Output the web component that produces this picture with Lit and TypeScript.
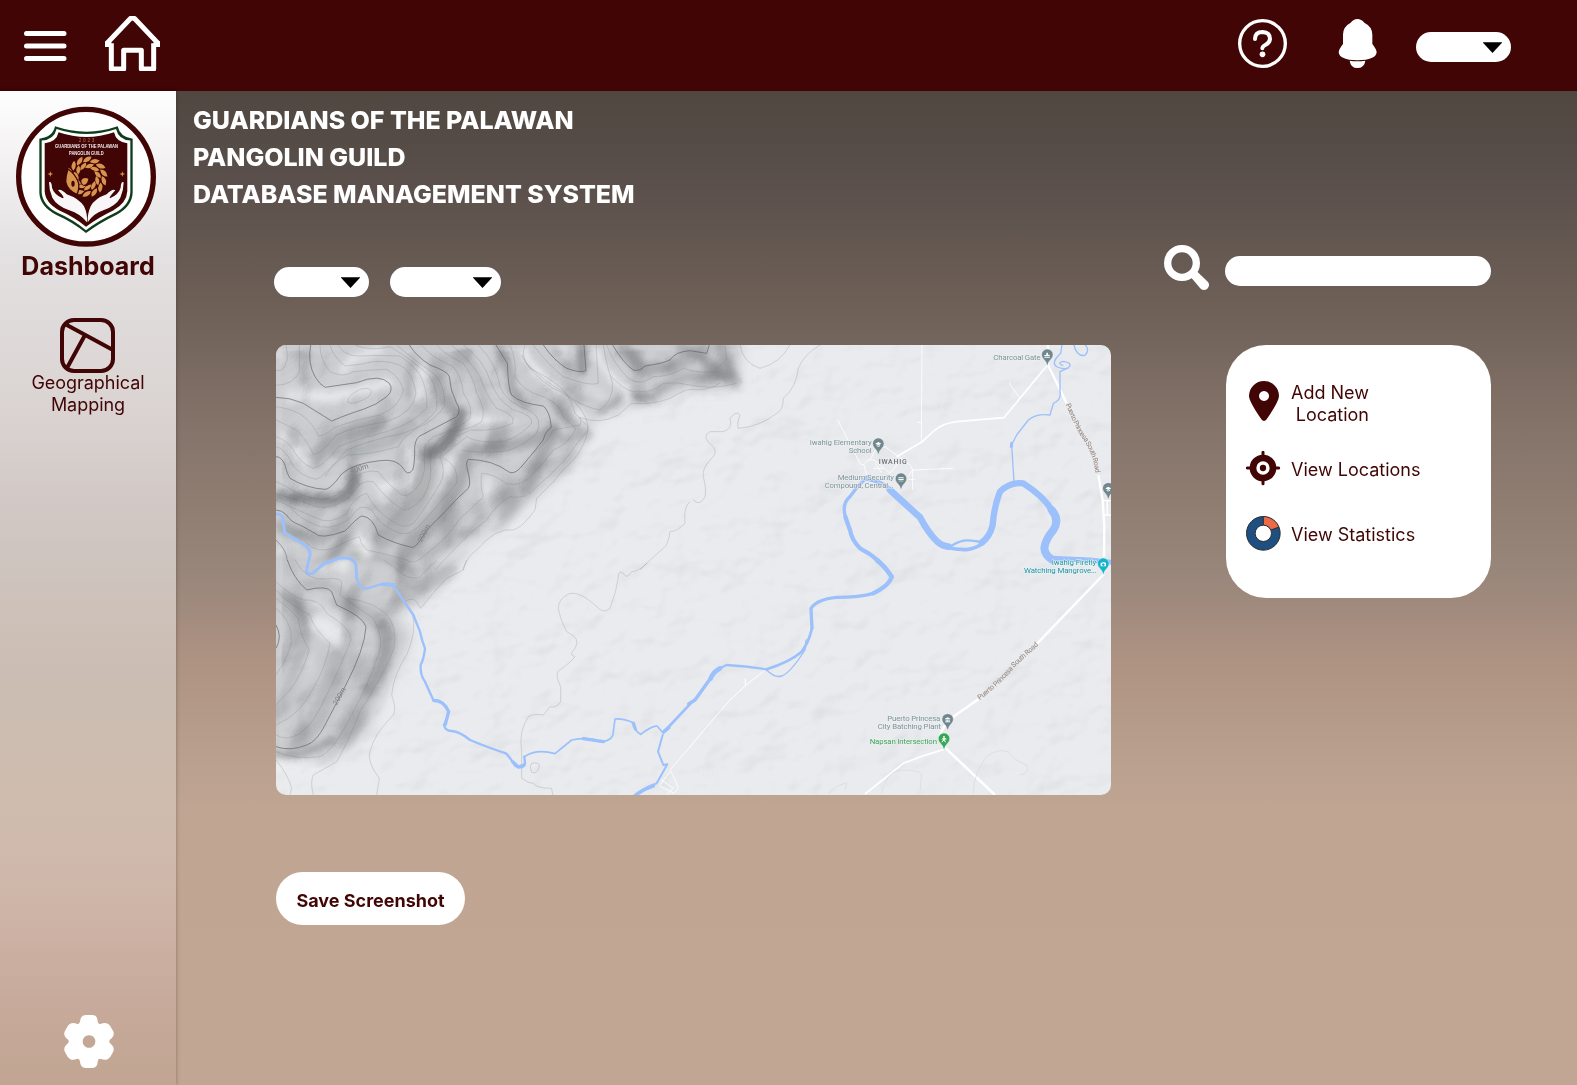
import { LitElement, html, css, svg } from "lit";
import { customElement, property } from "lit/decorators.js";

const MAROON = "#400504";

/* Contour lines of the north-western range. */
const majorNorth = [
  "M122,15Q112,70 135,110Q150,135 165,142L260,128Q330,100 358,130Q372,150 350,170Q320,195 280,208Q240,220 185,243Q140,215 100,190Q60,172 18,172",
  "M418,15Q440,50 480,75Q535,95 538,110Q540,150 560,190Q575,210 560,230L455,285Q438,290 434,320Q435,370 428,390Q412,410 400,385Q380,355 330,362Q250,370 215,402Q180,450 165,448Q110,445 60,415Q50,400 45,375Q35,350 18,350",
  "M678,15L712,70Q715,150 725,165Q750,190 820,198Q840,215 844,262Q825,275 820,300Q780,350 750,385Q730,405 715,395Q670,360 595,358Q585,365 595,400Q603,430 595,445Q560,475 530,510L470,570Q440,625 425,622Q370,610 325,585Q310,530 275,528Q260,535 225,573Q150,600 135,580L90,555Q60,545 50,525Q35,510 18,510",
  "M820,15Q850,60 890,85Q930,100 948,92L942,15",
  "M1028,15Q1060,70 1090,90Q1110,95 1125,78Q1180,70 1200,60Q1215,35 1260,32L1310,40L1318,15",
];
const minorNorth = [
  "M48,15Q60,70 35,90L18,92",
  "M88,15Q90,60 88,95Q70,135 18,136",
  "M150,15Q150,60 180,95Q220,115 250,95Q300,90 350,88Q390,110 400,150Q390,200 330,225Q250,240 190,265Q160,290 145,288Q130,250 95,225Q60,205 18,200",
  "M180,15Q190,50 225,78Q270,75 310,65Q370,60 405,85Q430,110 438,160Q430,220 350,245Q250,260 200,285Q150,345 130,343Q110,300 80,270Q40,250 18,240",
  "M205,15Q220,45 260,48Q330,45 390,48Q430,75 450,105Q475,150 470,205Q430,250 350,275Q250,300 205,320Q160,380 130,385Q90,370 70,330Q50,300 18,290",
  "M255,15Q300,35 360,20Q430,60 480,110Q505,150 500,210Q460,260 400,280Q300,300 230,330Q160,410 140,418Q90,410 65,370Q45,325 18,320",
  "M380,15Q420,50 490,100Q525,130 525,195Q500,240 440,265Q400,290 385,320Q300,345 230,345Q190,370 165,410",
  "M455,15Q480,50 550,80Q575,110 580,160Q610,200 600,235Q570,265 490,290Q460,310 462,350Q470,390 450,430Q420,475 395,465Q350,430 325,395Q280,385 240,425Q200,480 150,478Q90,470 50,440L18,425",
  "M500,15Q520,40 580,70Q610,110 620,160Q650,210 635,245Q600,270 540,275Q480,310 480,360Q490,420 460,470Q430,510 400,510Q350,480 310,425Q270,415 240,470Q190,510 140,500Q80,480 18,460",
  "M545,15Q600,60 630,110Q650,170 680,205Q740,225 728,250Q680,275 600,270Q530,300 510,350Q530,400 510,430Q470,500 430,550Q400,570 370,545Q320,520 290,460Q250,470 230,520Q180,560 130,530Q80,510 18,480",
  "M580,15Q640,60 660,120Q680,180 730,210Q790,225 785,250Q750,290 700,305Q620,310 590,290Q540,330 515,350Q570,380 560,430Q510,490 460,545Q420,590 390,580Q330,560 305,510Q270,485 245,530Q200,570 150,560Q90,540 60,500",
  "M625,15Q680,70 690,140Q710,190 780,212Q820,235 800,280Q760,320 700,335Q620,340 575,330",
  "M755,45Q780,100 850,145Q900,165 930,205Q955,240 955,270Q920,310 900,340Q860,390 800,440Q770,480 720,470Q680,490 650,540L600,580Q540,640 495,690",
  "M720,15Q740,60 735,110Q760,155 820,170Q870,190 880,230Q900,250 917,265Q900,310 850,330Q820,370 790,400Q760,440 710,432Q670,400 635,400Q630,440 640,470Q600,510 570,535Q530,600 470,640Q430,680 410,660Q340,640 290,630Q270,610 268,590Q235,600 190,625Q140,640 110,610",
  "M765,15Q750,50 780,85Q850,120 880,150Q905,180 915,220Q940,240 930,255L850,270Q830,310 790,340",
  "M790,15Q830,70 880,110Q960,140 985,130L978,15",
  "M770,70Q830,130 880,155Q930,200 990,210Q1030,180 1028,130Q1010,80 1000,15",
  "M1010,15Q1030,70 1075,115Q1110,140 1150,110Q1200,110 1240,85Q1280,100 1330,95L1370,60L1365,15",
  "M1020,105Q1060,150 1090,155Q1150,160 1180,130Q1220,125 1260,135Q1330,150 1400,130",
  "M928,232Q990,255 1045,225Q1080,195 1085,190Q1150,195 1200,175Q1240,150 1260,148Q1310,155 1350,130",
  "M928,232L953,260Q955,300 915,355Q880,385 850,425L800,475L795,510Q760,560 730,570Q680,560 620,630Q590,650 578,690",
  "M232,185Q235,165 270,148Q300,140 305,155Q300,175 265,185Q245,195 232,185",
  "M1260,485Q1240,500 1245,550Q1220,575 1200,575Q1195,615 1180,625Q1150,650 1110,690",
  "M1410,15Q1420,70 1470,85Q1530,70 1560,15",
  "M1650,15Q1600,45 1585,85Q1580,140 1540,175Q1540,210 1520,220Q1470,260 1405,265Q1400,250 1410,225Q1400,210 1380,235Q1390,265 1360,275L1320,275Q1290,290 1330,320Q1345,340 1320,360Q1295,390 1300,410Q1310,450 1305,470Q1290,500 1270,480",
];

/* Contour lines of the south-western hill. */
const majorSouth = [
  "M52,-15Q70,40 110,75Q170,60 185,80L200,120Q280,155 288,185Q285,250 225,365L165,480Q140,530 110,540Q60,560 18,545",
  "M18,180Q38,215 18,250",
];
const minorSouth = [
  "M75,-15Q110,50 170,42Q220,35 215,60L210,90Q280,140 310,160Q345,220 325,270Q290,370 250,440Q190,560 150,575Q80,585 18,560",
  "M230,100Q320,110 360,160Q390,220 360,280Q310,380 270,440Q230,540 200,590L130,630Q120,650 130,690",
  "M18,50Q60,90 100,105Q150,100 170,145Q245,190 243,225Q210,310 175,380Q130,480 90,505Q50,530 18,510",
  "M18,75Q60,120 120,150Q130,190 180,235Q170,300 130,370Q90,450 18,480",
  "M18,100Q60,130 85,160Q90,210 118,255Q100,320 60,375L18,420",
  "M18,130Q55,160 62,200Q75,250 18,330",
  "M18,585Q55,630 65,670L60,690",
  "M320,690L328,640Q290,590 300,560Q310,510 370,450Q380,430 365,390Q370,330 410,270Q440,200 428,150",
  "M405,110Q425,95 440,110L452,130Q500,70 530,40L580,15L590,-15",
  "M340,-15Q380,10 400,30Q430,45 450,35L500,-15",
  "M1130,-5Q1105,20 1085,20Q1070,45 1060,25Q1045,15 1045,35Q1040,80 1020,130Q1000,150 975,120Q930,80 900,85Q865,100 865,130Q870,160 890,200Q935,220 915,250Q895,270 915,275Q905,290 865,318Q855,330 872,365L872,410Q860,430 840,425L820,450Q790,445 775,455Q745,500 755,560L755,640Q775,655 790,655Q800,670 845,670L848,690",
  "M785,595Q810,590 808,605Q800,630 785,622Q778,605 785,595",
];

/* Outline of the raised ground; everything outside it is the plain. */
const highland = "M-20,-20H1415L1405,140L1260,140L1170,185L1080,195L970,240L945,310L890,390L790,475L690,560L600,620L530,720L440,790L380,830L425,880L400,960L350,1050L290,1180L190,1260L-20,1250Z";

const dark: [string, number, number][] = [
  ["M575,225Q560,270 520,320L475,345", 40, 0.75],
  ["M685,20Q725,90 725,150L770,200", 26, 0.5],
  ["M850,265Q800,310 700,320L600,330", 36, 0.45],
  ["M850,275Q820,330 770,450", 40, 0.45],
  ["M250,400Q250,460 200,480L25,470", 34, 0.68],
  ["M130,360Q210,270 330,250", 50, 0.34],
  ["M200,340Q330,340 420,250", 40, 0.28],
  ["M935,20L938,90", 30, 0.68],
  ["M860,30L900,90", 20, 0.3],
  ["M1060,30L1120,90L1200,80", 40, 0.45],
  ["M1200,80L1300,30", 44, 0.38],
  ["M1090,172L1150,174", 20, 0.5],
  ["M1160,150L1240,110L1380,105", 26, 0.35],
  ["M1300,60L1395,125L1350,20", 34, 0.42],
  ["M1230,20L1290,50", 30, 0.35],
  ["M470,340Q480,480 340,600", 60, 0.38],
  ["M580,360Q570,450 470,560L400,640", 54, 0.4],
  ["M110,40L100,120", 26, 0.34],
  ["M60,160L90,160", 20, 0.3],
  ["M430,60Q410,120 420,170", 26, 0.32],
  ["M500,120Q500,180 560,210", 40, 0.3],
  ["M600,60Q640,150 640,200", 30, 0.24],
  ["M850,180Q880,240 955,285L870,300", 22, 0.38],
  ["M990,215Q1040,190 1060,165", 20, 0.35],
  ["M700,470L600,580L450,650", 34, 0.18],
  ["M230,520Q200,590 120,600L30,560", 34, 0.38],
  ["M300,500L350,500", 24, 0.3],
  ["M560,575L630,575", 14, 0.3],
  ["M220,600L190,650L330,650L430,690", 26, 0.3],
  ["M400,690Q430,780 540,690", 44, 0.25],
  ["M110,740Q200,720 240,790", 26, 0.28],
  ["M40,760Q110,800 110,880", 28, 0.35],
  ["M200,790Q350,830 360,900Q340,1000 250,1110", 44, 0.22],
  ["M340,860Q365,960 300,1050", 44, 0.38],
  ["M100,900Q80,1050 20,1120", 46, 0.25],
  ["M200,950Q170,1120 90,1200", 56, 0.22],
  ["M20,1242L90,1246L190,1200", 18, 0.5],
];
const light: [string, number, number][] = [
  ["M220,90L240,60L330,30", 24, 0.75],
  ["M60,165L200,170L350,125", 34, 0.75],
  ["M40,290L110,370", 28, 0.65],
  ["M460,90L450,170", 36, 0.65],
  ["M600,240L725,240", 20, 0.9],
  ["M762,30Q780,90 870,150L940,235", 22, 0.9],
  ["M975,30Q1010,110 1060,140L1080,185", 18, 0.9],
  ["M880,20L880,45", 20, 0.7],
  ["M960,150L1000,170", 22, 0.5],
  ["M420,340L410,430L340,440", 28, 0.8],
  ["M545,360L530,390", 22, 0.7],
  ["M652,420L655,510", 26, 0.65],
  ["M700,500L620,600L520,660", 34, 0.35],
  ["M265,590L290,640", 28, 0.85],
  ["M310,420Q370,500 330,560", 22, 0.35],
  ["M150,690L230,660L220,690", 20, 0.8],
  ["M70,620L20,640", 24, 0.5],
  ["M150,850L200,890", 54, 0.8],
  ["M140,790Q200,830 240,860", 24, 0.5],
  ["M60,1080L120,960", 24, 0.25],
  ["M20,1285L130,1290", 30, 0.7],
  ["M18,35L35,50", 24, 0.6],
];

type Poi = { x: number; y: number; c: string; g: unknown };
const cap = svg`<path d="M-9,-2L0,-7L9,-2L0,3ZM-5,2V5Q0,9 5,5V2L0,5Z"/>`;
const bank = svg`<path d="M-8,-4L0,-8L8,-4V-2H-8ZM-6,-1H-3V5H-6ZM-1.5,-1H1.5V5H-1.5ZM3,-1H6V5H3ZM-8,5H8V7H-8Z"/>`;
const pois: Poi[] = [
  { x: 1072, y: 46, c: "#71878f", g: svg`<path d="M-9,4H8V7H-9ZM-3,-8H2V-2H7V2H-9V-1H-3Z"/>` },
  { x: 565, y: 313, c: "#71878f", g: cap },
  { x: 633, y: 418, c: "#71878f", g: svg`<path d="M-8,-6H8V-3H-8ZM-8,-1H8V2H-8ZM-7,4H7V6H-7Z"/>` },
  { x: 1255, y: 447, c: "#71878f", g: cap },
  { x: 1240, y: 673, c: "#12b5cb", g: svg`<path fill-rule="evenodd" d="M-8,-5H-3L-1,-7H3L5,-5H8V6H-8ZM0,-3A4,4 0 1 0 .1,-3Z"/>` },
  { x: 773, y: 1140, c: "#71878f", g: bank },
  { x: 762, y: 1198, c: "#34a853", g: svg`<path d="M0,-10A2.5,2.5 0 1 1 -.1,-10ZM-3,-4L2,-5L8,-1V1L3,0L2,3L7,9H4L-1,4L-5,9H-8L-3,2L-3,-1L-6,2L-7,0Z"/>` },
];
type Label = { t: string; x: number; y: number; w: number; c: string };
const grey = "#7d939b";
const labels: Label[] = [
  { t: "Charcoal Gate", x: 910, y: 60, w: 142, c: grey },
  { t: "Iwahig Elementary", x: 359, y: 315, w: 186, c: grey },
  { t: "School", x: 476, y: 339, w: 69, c: grey },
  { t: "Medium Security", x: 443, y: 420, w: 169, c: grey },
  { t: "Compound, Central…", x: 404, y: 444, w: 206, c: grey },
  { t: "Iwahig Firefly", x: 1085, y: 675, w: 134, c: "#1a97a6" },
  { t: "Watching Mangrove…", x: 1002, y: 699, w: 217, c: "#1a97a6" },
  { t: "Puerto Princesa", x: 592, y: 1142, w: 159, c: grey },
  { t: "City Batching Plant", x: 563, y: 1166, w: 190, c: grey },
  { t: "Napsan Intersection", x: 539, y: 1213, w: 202, c: "#3fa55a" },
];

@customElement("terrain-map")
export class TerrainMap extends LitElement {
  static styles = css`
    :host { display: block; width: 835px; height: 450px; border-radius: 10px; overflow: hidden; }
    svg { display: block; }
    .label { font: 23.5px Roboto, sans-serif; }
    .road { font: 21px Roboto, sans-serif; fill: #93837c; }
    .town { font: 500 21px Roboto, sans-serif; fill: #6d7175; }
    .height { font: 22px Roboto, sans-serif; fill: #7f8182; }
    .grain { mix-blend-mode: multiply; }
    .crags { mix-blend-mode: hard-light; }
  `;
  render() {
    const strokes = (list: string[], color: string, w: number) =>
      list.map((d) => svg`<path d=${d} fill="none" stroke=${color} stroke-width=${w} />`);
    const shade = (list: [string, number, number][], color: string) =>
      list.map(([d, w, o]) => svg`<path d=${d} fill="none" stroke=${color} stroke-width=${w} stroke-opacity=${o} stroke-linecap="round" stroke-linejoin="round" />`);
    return html`<svg width="835" height="450" viewBox="276 345 835 450">
      <defs>
        <filter id="soft" x="-20%" y="-20%" width="140%" height="140%">
          <feGaussianBlur stdDeviation="10" result="b" />
          <feTurbulence type="fractalNoise" baseFrequency="0.04" numOctaves="2" seed="4" result="n" />
          <feDisplacementMap in="b" in2="n" scale="10" xChannelSelector="R" yChannelSelector="G" />
        </filter>
        <filter id="edge" x="-20%" y="-20%" width="140%" height="140%"><feGaussianBlur stdDeviation="18" /></filter>
        <filter id="relief" x="0" y="0" width="100%" height="100%" color-interpolation-filters="sRGB">
          <feTurbulence type="fractalNoise" baseFrequency="0.022 0.028" numOctaves="3" seed="8" />
          <feColorMatrix values="0 0 0 0 0  0 0 0 0 0  0 0 0 0 0  1 0 0 0 0" />
          <feDiffuseLighting surfaceScale="7" diffuseConstant="1.15" lighting-color="#ffffff">
            <feDistantLight azimuth="225" elevation="60" />
          </feDiffuseLighting>
        </filter>
        <filter id="rock" x="0" y="0" width="100%" height="100%" color-interpolation-filters="sRGB">
          <feTurbulence type="fractalNoise" baseFrequency="0.02 0.015" numOctaves="2" seed="21" />
          <feColorMatrix values="0 0 0 0 0  0 0 0 0 0  0 0 0 0 0  1 0 0 0 0" />
          <feGaussianBlur stdDeviation="2.5" />
          <feDiffuseLighting surfaceScale="28" diffuseConstant="0.85" lighting-color="#ffffff">
            <feDistantLight azimuth="225" elevation="42" />
          </feDiffuseLighting>
        </filter>
        <mask id="hills"><g transform="translate(270 340) scale(.33333)"><path filter="url(#edge)" fill="#fff" d=${highland} /></g></mask>
      </defs>
      <rect x="276" y="345" width="835" height="450" fill="#e9ebee" />
      <g transform="translate(270 340) scale(.33333)">
        <path filter="url(#edge)" fill="#c9cbce" d=${highland} />
        <g filter="url(#soft)">${shade(dark, "#737577")}${shade(light, "#eceef0")}</g>
      </g>
      <g mask="url(#hills)" class="crags" opacity=".15"><rect x="276" y="345" width="480" height="450" filter="url(#rock)" /></g>
      <rect class="grain" x="276" y="345" width="835" height="450" filter="url(#relief)" opacity=".09" />
      <g transform="translate(270 340) scale(.33333)">
        ${strokes(minorNorth, "rgba(110,112,114,.34)", 2)}
        ${strokes(majorNorth, "rgba(95,97,99,.7)", 2.8)}
        <path d="M18,600Q50,630 52,662" fill="none" stroke="#8b8d8f" stroke-width="2.5" />
        <text class="height" transform="translate(243 400) rotate(-17)">400m</text>
        <text class="height" transform="translate(455 608) rotate(-62)">200m</text>
        <path fill="none" stroke="#9bc0fb" stroke-linejoin="round" stroke-width="9" d="M18,522Q42,520 40,550L44,578L105,615Q122,630 120,645L110,690Q108,705 128,700Q145,685 160,672L205,655Q250,648 258,675L260,718" />
      </g>
      <g transform="translate(270 565) scale(.33333)">
        ${strokes(minorSouth, "rgba(110,112,114,.34)", 2)}
        ${strokes(majorSouth, "rgba(95,97,99,.7)", 2.8)}
        <text class="height" transform="translate(200 422) rotate(-60)">200m</text>
        <g fill="none" stroke="#9bc0fb" stroke-linejoin="round" stroke-linecap="round">
          <path stroke-width="7" d="M260,30Q265,75 290,71L335,57Q370,52 376,70L430,150L450,200Q455,225 465,250Q462,280 452,300Q450,330 465,350L490,405Q520,405 536,440Q530,465 522,480Q525,498 545,498Q570,500 600,525Q660,550 708,565Q722,580 735,602Q760,615 765,595L763,575" />
          <path stroke-width="5" d="M763,575Q800,550 855,566L905,525Q960,515 990,530Q1030,528 1030,500L1035,462Q1060,460 1090,473Q1095,500 1112,508Q1150,480 1162,484L1180,505" />
          <path stroke-width="10" d="M335,58L372,60M492,407Q520,405 536,440Q532,455 526,478M728,590L745,606L762,600M940,521L1000,530M1090,475L1096,492" />
          <path stroke-width="6" d="M1178,510L1164,560L1180,600L1192,598L1160,655Q1130,665 1095,690" />
          <path stroke-width="11" d="M1182,500L1196,488M1150,662Q1120,672 1095,692" />
          <path stroke-width="8" d="M1190,492L1262,415" />
        </g>
        <path d="M1262,543L1200,615L1218,650L1225,670L1212,685L1168,662L1200,620M1175,645L1210,670L1190,690" fill="none" stroke="#fff" stroke-width="2.5" />
      </g>
      <g transform="translate(690 340) scale(.33333)">
        <g fill="none" stroke="#fff" stroke-linejoin="round">
          <path stroke-width="2.5" d="M696,15L694,305M682,247H694M443,240L505,360Q508,375 522,374M960,126V133L990,175M668,390L790,385M668,390V450M655,418H675M540,360L556,330L585,320L660,375L668,390L655,410M522,374L532,410M524,370Q535,355 555,362L600,400L625,370M550,385H580M555,370L575,398" />
          <path stroke-width="5" d="M620,350L694,307L735,270Q760,250 800,245L942,233L1070,78" />
          <path stroke-width="7" d="M1074,15V75L1130,190M1225,405L1238,480L1243,560L1242,650" />
          <path stroke-width="4" d="M1239,482H1262M1252,482V525M1239,525H1262" />
        </g>
        <g fill="none" stroke="#9bc0fb" stroke-linejoin="round" stroke-linecap="round">
          <path stroke-width="4" d="M1116,15L1112,40Q1080,70 1102,81Q1128,92 1138,80Q1146,68 1120,64Q1100,68 1118,76M1135,84L1110,95V155Q1115,180 1090,190L1080,225Q1040,220 1015,240L980,285L965,315L972,425M1152,15Q1160,50 1185,46Q1200,30 1186,15" />
          <path stroke-width="9" d="M965,310L964,320" />
          <path stroke-width="10" d="M530,412Q500,440 480,470Q455,490 466,530" />
          <path stroke-width="13" d="M466,530L480,570Q485,600 510,625Q570,655 605,710" />
          <path stroke-width="12" d="M530,416Q580,425 600,450" />
          <path stroke-width="20" d="M600,450Q660,505 690,532Q715,580 742,605Q755,618 775,620" />
          <path stroke-width="11" d="M770,622Q800,630 830,629Q858,625 880,610" />
          <path stroke-width="7" d="M785,617Q815,597 845,602Q862,604 880,608" />
          <path stroke-width="19" d="M875,608Q900,590 908,555Q912,500 930,455Q960,425 1000,430Q1070,475 1090,520" />
          <path stroke-width="24" d="M1085,510Q1110,540 1090,570Q1065,600 1063,625Q1065,645 1085,658" />
          <path stroke-width="15" d="M1085,655L1200,660L1275,668" />
        </g>
      </g>
      <g transform="translate(690 560) scale(.33333)">
        <g fill="none" stroke="#9bc0fb" stroke-linejoin="round" stroke-linecap="round">
          <path stroke-width="13" d="M560,0Q590,25 605,50Q600,75 550,100" />
          <path stroke-width="10" d="M550,100Q510,112 440,112Q380,118 363,145L366,205" />
          <path stroke-width="8" d="M366,205Q355,250 335,275Q300,305 230,328" />
          <path stroke-width="7" d="M230,328Q170,318 110,315Q85,325 65,345" />
          <path stroke-width="14" d="M90,325Q70,335 62,355" />
          <path stroke-width="10" d="M65,350Q40,385 15,420L-4,432" />
          <path stroke-width="4" d="M230,330Q255,355 275,348Q300,340 345,270L348,240" />
        </g>
        <g fill="none" stroke="#fff" stroke-linejoin="round">
          <path stroke-width="3" d="M220,335Q170,370 120,420Q50,500 0,560M166,355V375" />
          <path stroke-width="5" d="M525,702L640,610Q700,585 762,568" />
          <path stroke-width="7.5" d="M1242,42L1040,252M865,418L790,470Q755,500 750,530L762,560L915,705" />
        </g>
        <path d="M850,700Q850,640 890,590Q920,565 955,575Q970,600 1010,615Q1020,640 990,645M585,670Q600,630 640,630Q690,630 695,645L690,690M415,702Q430,680 470,668L465,690M580,680L575,700" fill="none" stroke="#d6d8da" stroke-width="2" />
      </g>
      <g transform="translate(690 340) scale(.33333)">
        ${labels.map((l) => svg`<text class="label" x=${l.x} y=${l.y} textLength=${l.w} fill=${l.c} stroke="#eef0f2" stroke-width="3" paint-order="stroke">${l.t}</text>`)}
        <text class="town" x="566" y="372" textLength="84">IWAHIG</text>
        <path id="roadNorth" d="M1127,193Q1150,250 1170,285Q1210,335 1218,408" fill="none" />
        <text class="road"><textPath href="#roadNorth" textLength="226">Puerto Princesa South Road</textPath></text>
        <path id="roadSouth" d="M869,1080Q935,1030 975,980L1046,915" fill="none" />
        <text class="road"><textPath href="#roadSouth" textLength="242">Puerto Princesa South Road</textPath></text>
        ${pois.map((p) => svg`<g transform="translate(${p.x} ${p.y})">
          <path d="M0,31Q-3,18 -12,10A17,17 0 1 1 12,10Q3,18 0,31Z" fill=${p.c} stroke="#fff" stroke-width="1" />
          <g fill="#fff">${p.g}</g></g>`)}
      </g>
    </svg>`;
  }
}

@customElement("pill-select")
export class PillSelect extends LitElement {
  @property({ type: Boolean }) wide = false;
  static styles = css`
    :host { display: flex; box-sizing: border-box; width: 95px; height: 30px; border-radius: 15px; background: #fff; justify-content: flex-end; padding: 10px 9px 0 0; }
    :host([wide]) { width: 111px; }
    svg { display: block; }
  `;
  render() {
    return html`<svg width="19" height="11" viewBox="0 0 19 11"><path d="M-.5,.3H19.500L9.500,11Z" fill="#000" /></svg>`;
  }
}

@customElement("guild-logo")
export class GuildLogo extends LitElement {
  static styles = css`
    :host { display: block; }
    svg { display: block; }
    text { font-family: "Liberation Sans", sans-serif; font-weight: 700; fill: #f5eeee; }
    .year { fill: #b8784a; font-weight: 400; }
  `;
  render() {
    const shield = "M165,378Q260,410 353,378Q360,411 398,415V578Q396,618 350,643Q298,668 258,698Q218,665 168,643Q120,618 118,578V415Q158,411 165,378Z";
    const scaled = (k: number, fill: string) =>
      svg`<path d=${shield} fill=${fill} transform="translate(258 532) scale(${k}) translate(-258 -532)" />`;
    const ring = (n: number, r: number, s: number, off: number) =>
      Array.from({ length: n }, (_, i) => {
        const a = off + (i * 360) / n;
        return svg`<path d="M0,-14Q13,-4 3,14Q-11,3 0,-14Z" transform="rotate(${a} 261 529) translate(261 ${529 - r}) rotate(62) scale(${s})" />`;
      });
    return html`<svg width="140" height="142" viewBox="48 317 420 426">
      <circle cx="258" cy="529" r="202" fill="#fff" stroke=${MAROON} stroke-width="16" />
      ${scaled(1, "#0f3d1c")}${scaled(0.95, "#fff")}${scaled(0.885, MAROON)}
      <text class="year" x="236" y="424" font-size="14" textLength="47">2023</text>
      <text x="165" y="444" font-size="17" textLength="189" lengthAdjust="spacingAndGlyphs">GUARDIANS OF THE PALAWAN</text>
      <text x="207" y="463" font-size="17" textLength="104" lengthAdjust="spacingAndGlyphs">PANGOLIN GUILD</text>
      <g fill="#d8934f">
        <g>${ring(14, 53, 1.08, 0)}${ring(11, 34, 1, 12)}</g>
        <path d="M204,506Q226,520 236,548Q238,568 231,582Q203,572 197,545Q197,525 204,506Z" stroke=${MAROON} stroke-width="4" />
        <circle cx="256" cy="543" r="15" fill=${MAROON} />
        <path d="M244,540Q250,530 265,535Q263,552 250,554Q243,549 244,540Z" />
        <path d="M151,512L153,519L160,521L153,523L151,530L149,523L142,521L149,519ZM367,512L369,519L376,521L369,523L367,530L365,523L358,521L365,519Z" />
      </g>
      <ellipse cx="219" cy="550" rx="5" ry="9" fill=${MAROON} />
      <g fill="#f8f6f6">
        <path d="M147,546Q155,542 156,562Q162,582 188,594Q198,594 174,570Q182,563 200,582Q236,594 252,618Q263,640 261,666Q240,640 208,630Q170,616 157,592Q147,570 147,546Z" />
        <path d="M371,546Q363,542 362,562Q356,582 330,594Q324,594 346,570Q338,563 320,582Q285,594 272,618Q262,640 263,666Q280,640 310,630Q348,616 361,592Q371,570 371,546Z" />
      </g>
    </svg>`;
  }
}

@customElement("app-root")
export class AppRoot extends LitElement {
  static styles = css`
    :host { display: flex; flex-direction: column; width: 1577px; height: 1085px; overflow: hidden; font-family: Inter, sans-serif; color: #400504; }
    svg { display: block; flex: none; }
    header { display: flex; flex: none; box-sizing: border-box; height: 91px; background: #400504; padding: 16px 66px 0 24px; align-items: flex-start; }
    .menu { margin-top: 15px; }
    .home { margin-left: 38px; }
    .help { margin: 3px 0 0 auto; }
    .bell { margin: 3px 0 0 51px; }
    header pill-select { margin: 16px 0 0 39px; }
    .body { display: flex; flex: 1; min-height: 0; }
    aside { display: flex; flex: none; flex-direction: column; align-items: center; box-sizing: border-box; width: 176px; padding: 15px 0 17px; position: relative;
      background: linear-gradient(#fffeff 0, #e4e1e2 160px, #d9d2d0 330px, #d0c7c3 430px, #cbbdb3 580px, #cfbcae 720px, #cfb8ab 780px, #cdb3a6 830px, #c7aa9b 910px, #c1a592 100%);
      box-shadow: 0 0 4px rgba(0, 0, 0, .3); }
    guild-logo { margin-right: 4px; }
    .dash { margin: 3px 0 0; font-size: 25px; line-height: 30px; font-weight: 700; }
    .geo { margin: 37px 1px 0 0; }
    .geo-label { text-align: center; font-size: 18px; line-height: 22px; margin-top: -1px; letter-spacing: -.03px; }
    .gear { margin: auto 0 0 2px; }
    main { flex: 1; background: linear-gradient(#504741 0, #5c514c 105px, #6e6057 215px, #85746a 340px, #99867a 480px, #a18b7e 520px, #ae9383 570px, #baa08f 670px, #c0a592 720px, #c1a693 100%); }
    h1 { margin: 0; padding: 11px 0 0 17px; color: #fff; font-size: 25px; line-height: 37px; font-weight: 800; letter-spacing: -.03px; white-space: nowrap; }
    .tools { display: flex; align-items: flex-start; margin-top: 32px; padding-left: 98px; height: 100px; }
    .tools pill-select { margin: 22px 21px 0 0; }
    .search { margin-left: 642px; }
    .field { width: 266.5px; height: 30px; border: 0; padding: 0; border-radius: 15px; background: #fff; margin: 11px 0 0 15.5px; }
    .content { display: flex; align-items: flex-start; padding-left: 100px; gap: 115px; }
    .card { display: grid; grid-template-columns: 35px auto; column-gap: 10px; justify-content: start; align-content: start; box-sizing: border-box; width: 265px; height: 253px; border-radius: 40px; background: #fff; padding: 36px 0 0 20px; font-size: 18px; line-height: 22px; grid-template-rows: 70px 65px 36px; }
    .card span { padding-top: 8px; justify-self: start; }
    .card .two { padding-top: 1px; text-align: right; }
    .save { border: 0; width: 189px; height: 53px; border-radius: 27px; margin: 77px 0 0 100px; padding: 4.6px 0 0; background: #fff; color: #400504; font: 700 18px/22px Inter, sans-serif; }
  `;
  render() {
    return html`
      <header>
        <svg class="menu" width="43" height="31" viewBox="0 0 43 31"><path d="M2.5,2.5H40M2.5,15H40M2.500,27.500H40" stroke="#fff" stroke-width="5" stroke-linecap="round" /></svg>
        <svg class="home" width="55" height="55" viewBox="315 48 165 165"><path d="M318,133L390,57Q397,50 405,57L477,133M334,130V207H371V151H424V207H461V130" fill="none" stroke="#fff" stroke-width="15" stroke-linejoin="round" /><path d="M315,124L334,126V141H315ZM480,124L461,126V141H480Z" fill="#fff" /></svg>
        <svg class="help" width="49" height="49" viewBox="264 57 147 147"><circle cx="337.500" cy="130.500" r="68.500" fill="none" stroke="#fff" stroke-width="10" /><path d="M315,117Q315,96 338,96Q360,97 360,117Q359,128 347,134Q337,139 337,145" fill="none" stroke="#fff" stroke-width="12" stroke-linecap="round" /><circle cx="337.500" cy="163" r="8.500" fill="#fff" /></svg>
        <svg class="bell" width="39" height="49" viewBox="564 57 117 147"><path d="M622,57Q634,57 643,68Q667,80 667,104V132Q679,147 680,157Q678,180 622,181Q568,180 566,157Q567,147 579,132V104Q579,80 602,68Q611,57 622,57ZM599,182Q622,185 646,182Q643,204 622,204Q602,204 599,182Z" fill="#fff" /></svg>
        <pill-select></pill-select>
      </header>
      <div class="body">
        <aside>
          <guild-logo></guild-logo>
          <h2 class="dash">Dashboard</h2>
          <svg class="geo" width="55" height="55" viewBox="0 0 55 55"><g fill="none" stroke=${MAROON} stroke-width="4"><rect x="2" y="2" width="51" height="51" rx="12" /><path d="M5,6L53,32M25,17L7,50" /></g></svg>
          <div class="geo-label">Geographical<br />Mapping</div>
          <svg class="gear" width="50" height="53" viewBox="192 465 150 159"><path fill-rule="evenodd" fill="#fff" d="M257,465H277Q293,466 293,484Q294,495 303,491Q322,485 331,499L338,511Q346,524 335,535Q320,544 335,554Q346,565 338,578L331,590Q322,604 303,597Q294,594 293,605Q293,623 277,624H257Q241,623 240,605Q239,594 230,597Q212,604 203,590L196,578Q188,565 199,554Q214,544 199,535Q188,524 196,511L203,499Q212,485 230,491Q239,495 240,484Q241,466 257,465ZM267,525.500A19,19 0 1 0 267.100,525.500Z" /></svg>
        </aside>
        <main>
          <h1>GUARDIANS OF THE PALAWAN<br />PANGOLIN GUILD<br />DATABASE MANAGEMENT SYSTEM</h1>
          <div class="tools">
            <pill-select></pill-select>
            <pill-select wide></pill-select>
            <svg class="search" width="45" height="45" viewBox="42 735 135 135"><circle cx="96" cy="789" r="43" fill="none" stroke="#fff" stroke-width="22" /><path d="M124,833L142,815L174,846Q181,856 172,866Q162,874 152,866Z" fill="#fff" /></svg>
            <input class="field" aria-label="Search" />
          </div>
          <div class="content">
            <terrain-map></terrain-map>
            <div class="card">
              <svg width="35" height="40" viewBox="108 153 105 120"><path fill-rule="evenodd" fill=${MAROON} d="M162,153A45,45 0 0 1 207,198Q207,214 170,268Q162,278 154,268Q117,214 117,198A45,45 0 0 1 162,153ZM162,183A15,15 0 1 0 162.100,183Z" /></svg>
              <span class="two">Add New<br />Location</span>
              <svg width="35" height="35" viewBox="108 363 105 105"><circle cx="159" cy="414" r="30" fill="none" stroke=${MAROON} stroke-width="20" /><circle cx="159" cy="414" r="9.500" fill=${MAROON} /><path d="M159,367V380M159,448V461M112,414H125M193,414H206" stroke=${MAROON} stroke-width="9" stroke-linecap="round" /></svg>
              <span>View Locations</span>
              <svg width="35" height="35" viewBox="108 558 105 105"><circle cx="160" cy="610" r="37.500" fill="none" stroke="#1e4f80" stroke-width="26" /><path d="M160,559A51,51 0 0 1 207.500,591L183.500,600A25,25 0 0 0 160,585Z" fill="#ec6a45" /><g fill="none" stroke="#2c2f33" stroke-width="3"><circle cx="160" cy="610" r="50.500" /><circle cx="160" cy="610" r="24.500" /><path d="M160,559V585M183,600L207,591" /></g></svg>
              <span>View Statistics</span>
            </div>
          </div>
          <button class="save">Save Screenshot</button>
        </main>
      </div>
    `;
  }
}
